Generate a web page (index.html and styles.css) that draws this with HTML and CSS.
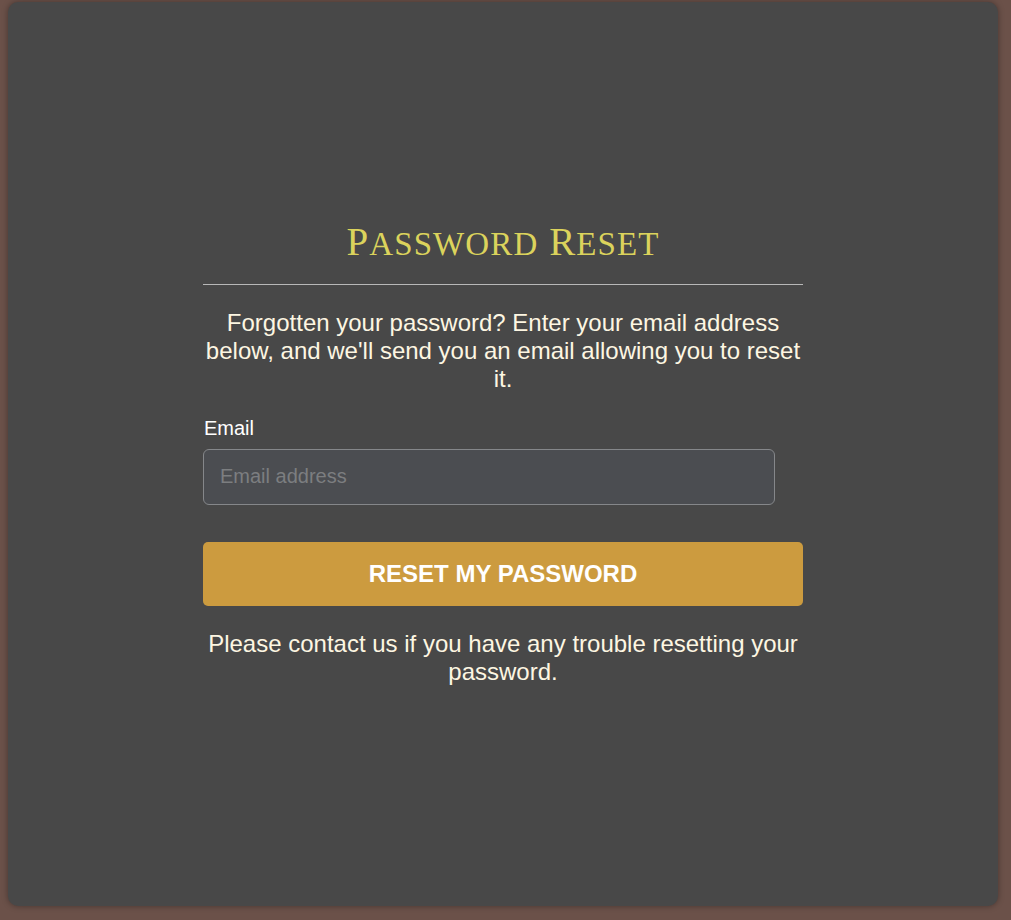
FILE: index.html
```html
<!DOCTYPE html>
<html>
<head>
<meta charset="utf-8">
<link rel="stylesheet" href="styles.css">
</head>
<body>
<main class="card">
  <section class="panel">
    <h1 class="title">P<span class="sc">assword</span> R<span class="sc">eset</span></h1>
    <hr class="rule">
    <p class="intro">Forgotten your password? Enter your email address below, and we'll send you an email allowing you to reset it.</p>
    <form class="form">
      <label class="label" for="email">Email</label>
      <input class="input" id="email" type="email" placeholder="Email address">
      <button class="button" type="button">RESET MY PASSWORD</button>
    </form>
    <p class="note">Please contact us if you have any trouble resetting your password.</p>
  </section>
</main>
</body>
</html>
```
FILE: styles.css
```css
html, body {
  margin: 0;
  padding: 0;
}
body {
  background: #6b5149;
  padding: 2px 13px 14px 8px;
  font-family: "Liberation Sans", Arial, sans-serif;
  box-sizing: border-box;
  height: 920px;
}
.card {
  background: #484848;
  border-radius: 10px;
  height: 904px;
  box-sizing: border-box;
  padding-bottom: 3px;
  box-shadow: 0 0 6px rgba(0,0,0,0.35);
  display: flex;
  align-items: center;
  justify-content: center;
}
.panel {
  width: 600px;
  display: flex;
  flex-direction: column;
  align-items: stretch;
}
.title {
  margin: 0;
  text-align: center;
  font-family: "Liberation Serif", serif;
  font-weight: normal;
  font-size: 39px;
  letter-spacing: 1.1px;
  line-height: 44px;
  color: #dbd35c;
}
.sc {
  font-size: 33px;
  text-transform: uppercase;
}
.rule {
  margin: 18px 0 0;
  border: 0;
  border-top: 1px solid #b8b8b8;
  height: 0;
}
.intro {
  margin: 24px 0 0;
  text-align: center;
  color: #fdf6e2;
  font-size: 24px;
  line-height: 28px;
}
.form {
  display: flex;
  flex-direction: column;
  margin-top: 24px;
}
.label {
  color: #ffffff;
  font-size: 20px;
  line-height: 23px;
  margin-left: 1px;
}
.input {
  margin-top: 9px;
  width: 572px;
  height: 56px;
  box-sizing: border-box;
  background: #4b4d51;
  border: 1px solid #85878a;
  border-radius: 6px;
  padding: 0 16px;
  font-family: "Liberation Sans", Arial, sans-serif;
  font-size: 20px;
  color: #ddd;
}
.input::placeholder {
  color: #7c7e80;
}
.button {
  margin-top: 37px;
  height: 64px;
  border: 0;
  border-radius: 5px;
  background: #cc9b3f;
  color: #ffffff;
  font-family: "Liberation Sans", Arial, sans-serif;
  font-weight: bold;
  font-size: 24px;
}
.note {
  margin: 24px 0 0;
  text-align: center;
  color: #fdf6e2;
  font-size: 24px;
  line-height: 28px;
}
```
